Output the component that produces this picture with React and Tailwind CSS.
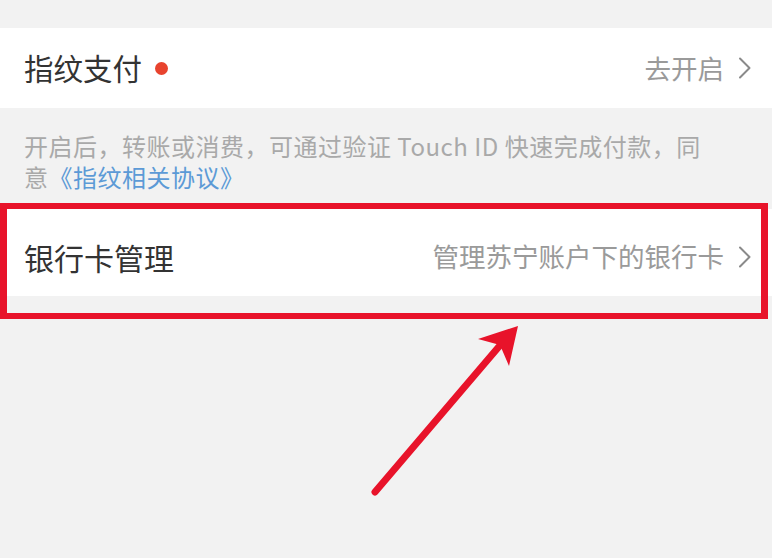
import React from 'react';

const Chevron = () => (
  <svg width="14" height="22" viewBox="0 0 14 22" fill="none" className="ml-[14px] shrink-0">
    <path d="M2 1.5 L11.5 11 L2 20.5" stroke="#8a8a8a" strokeWidth="2" strokeLinecap="round" strokeLinejoin="round" />
  </svg>
);

const App = () => {
  return (
    <div
      className="relative w-[772px] h-[558px] overflow-hidden bg-[#f2f2f2]"
      style={{ fontFamily: '"Noto Sans CJK SC", "Noto Sans", sans-serif' }}
    >
      <div className="h-[28px]" />

      {/* 指纹支付 */}
      <div className="h-[80px] bg-white flex items-center justify-between pl-[24px] pr-[20px]">
        <div className="flex items-center">
          <span className="text-[29.5px] text-[#333333] leading-none">指纹支付</span>
          <span className="ml-[13px] w-[13px] h-[13px] rounded-full bg-[#e8432e]" />
        </div>
        <div className="flex items-center">
          <span className="text-[26.5px] text-[#9a9a9a] leading-none">去开启</span>
          <Chevron />
        </div>
      </div>

      {/* hint */}
      <div className="h-[101px] pt-[22px] pl-[24px] pr-[10px]">
        <p className="text-[24px] leading-[31px] text-[#a9a9a9] tracking-[0.5px] whitespace-nowrap">
          开启后，转账或消费，可通过验证 Touch ID 快速完成付款，同
          <br />
          意<span className="text-[#5c9ad6]">《指纹相关协议》</span>
        </p>
      </div>

      {/* 银行卡管理 */}
      <div className="h-[87px] bg-white flex items-center justify-between pt-[8px] pl-[24px] pr-[20px]">
        <span className="text-[30px] text-[#333333] leading-none">银行卡管理</span>
        <div className="flex items-center">
          <span className="text-[26.5px] text-[#9a9a9a] leading-none">管理苏宁账户下的银行卡</span>
          <Chevron />
        </div>
      </div>

      {/* annotation box */}
      <div className="absolute left-0 top-[203px] w-[768px] h-[116px] border-x-[7px] border-y-[6px] border-[#e8132a]" />

      {/* annotation arrow */}
      <svg className="absolute left-0 top-0" width="772" height="558" viewBox="0 0 772 558">
        <line x1="375" y1="492" x2="508" y2="336" stroke="#e8132a" strokeWidth="7" strokeLinecap="round" />
        <polygon points="518,326 478,339 500,345 509,366" fill="#e8132a" />
      </svg>
    </div>
  );
};

export default App;
